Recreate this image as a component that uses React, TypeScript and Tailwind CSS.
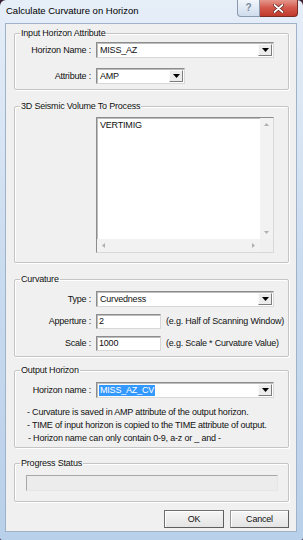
import React from "react";

const font = { fontFamily: '"Liberation Sans", Arial, sans-serif' };

function Arrow() {
  return (
    <svg width="7" height="4" viewBox="0 0 7 4">
      <polygon points="0,0 7,0 3.5,4" fill="#000" />
    </svg>
  );
}

function Combo({ w, text, selected }: { w: string; text: string; selected?: boolean }) {
  return (
    <div
      className={`${w} h-[16px] flex bg-white border border-t-[#8c8c8c] border-l-[#8c8c8c] border-r-[#d8d8d8] border-b-[#d8d8d8] shadow-[inset_1px_1px_0_#bdbdbd]`}
    >
      <div className="flex-1 flex items-center pl-[2px] overflow-hidden">
        {selected ? (
          <span className="bg-[#3399ff] text-white leading-[11px] px-[1px]">{text}</span>
        ) : (
          <span className="leading-[11px] px-[1px]">{text}</span>
        )}
      </div>
      <div className="w-[14px] m-[1px] ml-0 flex items-center justify-center bg-[#ececec] border border-t-[#fafafa] border-l-[#fafafa] border-r-[#7d7d7d] border-b-[#7d7d7d]">
        <Arrow />
      </div>
    </div>
  );
}

function TextBox({ text }: { text: string }) {
  return (
    <div className="w-[65px] h-[15px] flex items-center pl-[2px] bg-white border border-t-[#8c8c8c] border-l-[#8c8c8c] border-r-[#d8d8d8] border-b-[#d8d8d8] shadow-[inset_1px_1px_0_#bdbdbd]">
      <span className="leading-[11px]">{text}</span>
    </div>
  );
}

function Group({ title, h, mt, children }: { title: string; h: string; mt: string; children: React.ReactNode }) {
  return (
    <fieldset
      className={`${h} ${mt} ml-[8px] w-[275px] border border-[#c4c4c4] rounded-[2px] shadow-[inset_1px_1px_0_#ffffff,1px_1px_0_#ffffff] px-0 pb-0`}
    >
      <legend className="ml-[5px] px-[1px] leading-[10px] text-[#111]">{title}</legend>
      {children}
    </fieldset>
  );
}

function Row({ label, children, className = "" }: { label: string; children: React.ReactNode; className?: string }) {
  return (
    <div className={`flex items-center ${className}`}>
      <div className="w-[76px] text-right pr-[0px] leading-[11px]">{label}</div>
      <div className="ml-[5px] flex items-center">{children}</div>
    </div>
  );
}

function Button({ label, w, def }: { label: string; w: string; def?: boolean }) {
  return (
    <div
      className={`${w} h-[18px] flex items-center justify-center bg-gradient-to-b from-[#f6f6f6] to-[#e4e4e4] border ${
        def ? "border-[#6f6f6f]" : "border-[#9a9a9a]"
      } border-r-[#5e5e5e] border-b-[#5e5e5e] shadow-[inset_1px_1px_0_#ffffff]`}
    >
      <span className="leading-[11px]">{label}</span>
    </div>
  );
}

export default function App() {
  return (
    <div className="w-[303px] h-[540px] bg-[#3b2335]" style={font}>
      <div className="w-[303px] h-[540px] rounded-t-[6px] rounded-b-[2px] bg-gradient-to-b from-[#e6eef8] via-[#c9dbef] to-[#b9d0ea] flex flex-col text-[9px] tracking-[-0.2px] text-[#111]">
        {/* Title bar */}
        <div className="h-[23px] flex items-start justify-between">
          <div className="pl-[6px] pt-[5px] text-[9.5px] tracking-[0px] leading-[12px] text-black">
            Calculate Curvature on Horizon
          </div>
          <div className="flex mr-[5px]">
            <div className="w-[23px] h-[17px] flex items-center justify-center rounded-bl-[4px] border border-t-0 border-[#8a99ad] bg-gradient-to-b from-[#f2f6fb] to-[#cfdcec] text-[#7b8a9e] text-[10px] font-bold leading-[10px]">
              ?
            </div>
            <div className="w-[38px] h-[17px] flex items-center justify-center rounded-br-[4px] border border-t-0 border-l-0 border-[#7a2b24] bg-gradient-to-b from-[#e5968c] via-[#d2574a] to-[#c0392b]">
              <svg width="11" height="9" viewBox="0 0 11 9">
                <path d="M1.5 1 L9.5 8 M9.5 1 L1.5 8" stroke="#5a1a14" strokeWidth="3.2" strokeLinecap="round" />
                <path d="M1.5 1 L9.5 8 M9.5 1 L1.5 8" stroke="#ffffff" strokeWidth="1.8" strokeLinecap="round" />
              </svg>
            </div>
          </div>
        </div>

        {/* Client area */}
        <div className="ml-[5px] mr-[6px] h-[509px] bg-[#f0f0f0] border border-[#9fb2c8] flex flex-col">
          <Group title="Input Horizon Attribute" h="h-[62px]" mt="mt-[4px]">
            <div className="pt-[4px] flex flex-col gap-[10px]">
              <Row label="Horizon Name :">
                <Combo w="w-[178px]" text="MISS_AZ" />
              </Row>
              <Row label="Attribute :">
                <Combo w="w-[89px]" text="AMP" />
              </Row>
            </div>
          </Group>

          <Group title="3D Seismic Volume To Process" h="h-[162px]" mt="mt-[11px]">
            <div className="pt-[6px] pl-[81px]">
              <div className="w-[178px] h-[136px] flex flex-col bg-white border border-t-[#8c8c8c] border-l-[#8c8c8c] border-r-[#d8d8d8] border-b-[#d8d8d8] shadow-[inset_1px_1px_0_#bdbdbd]">
                <div className="flex flex-1">
                  <div className="flex-1 pl-[3px] pt-[2px] leading-[11px]">VERTIMIG</div>
                  <div className="w-[13px] bg-[#f2f2f2] flex flex-col items-center justify-between py-[5px]">
                    <svg width="5" height="3" viewBox="0 0 5 3">
                      <polygon points="0,3 5,3 2.5,0" fill="#b0b0b0" />
                    </svg>
                    <svg width="5" height="3" viewBox="0 0 5 3">
                      <polygon points="0,0 5,0 2.5,3" fill="#b0b0b0" />
                    </svg>
                  </div>
                </div>
                <div className="flex h-[13px]">
                  <div className="flex-1 bg-[#f2f2f2] flex items-center justify-between px-[5px]">
                    <svg width="3" height="5" viewBox="0 0 3 5">
                      <polygon points="3,0 3,5 0,2.5" fill="#b0b0b0" />
                    </svg>
                    <svg width="3" height="5" viewBox="0 0 3 5">
                      <polygon points="0,0 0,5 3,2.5" fill="#b0b0b0" />
                    </svg>
                  </div>
                  <div className="w-[13px] bg-[#f0f0f0]" />
                </div>
              </div>
            </div>
          </Group>

          <Group title="Curvature" h="h-[83px]" mt="mt-[11px]">
            <div className="pt-[7px] flex flex-col gap-[7px]">
              <Row label="Type :">
                <Combo w="w-[178px]" text="Curvedness" />
              </Row>
              <Row label="Apperture :">
                <TextBox text="2" />
                <span className="ml-[5px] leading-[11px]">(e.g. Half of Scanning Window)</span>
              </Row>
              <Row label="Scale :">
                <TextBox text="1000" />
                <span className="ml-[5px] leading-[11px]">(e.g. Scale * Curvature Value)</span>
              </Row>
            </div>
          </Group>

          <Group title="Output Horizon" h="h-[83px]" mt="mt-[8px]">
            <div className="pt-[7px]">
              <Row label="Horizon name :">
                <Combo w="w-[178px]" text="MISS_AZ_CV" selected />
              </Row>
              <div className="mt-[8px] pl-[12px] leading-[13px]">
                <div>- Curvature is saved in AMP attribute of the output horizon.</div>
                <div>- TIME of input horizon is copied to the TIME attribute of output.</div>
                <div className="pl-[1px]">- Horizon name can only contain 0-9, a-z or _ and -</div>
              </div>
            </div>
          </Group>

          <Group title="Progress Status" h="h-[44px]" mt="mt-[10px]">
            <div className="pt-[7px] pl-[11px]">
              <div className="w-[252px] h-[16px] bg-[#ececec] border border-t-[#a8a8a8] border-l-[#a8a8a8] border-r-[#e6e6e6] border-b-[#e6e6e6]" />
            </div>
          </Group>

          <div className="mt-[8px] mr-[7px] flex justify-end gap-[6px]">
            <Button label="OK" w="w-[60px]" def />
            <Button label="Cancel" w="w-[59px]" />
          </div>
        </div>
      </div>
    </div>
  );
}
